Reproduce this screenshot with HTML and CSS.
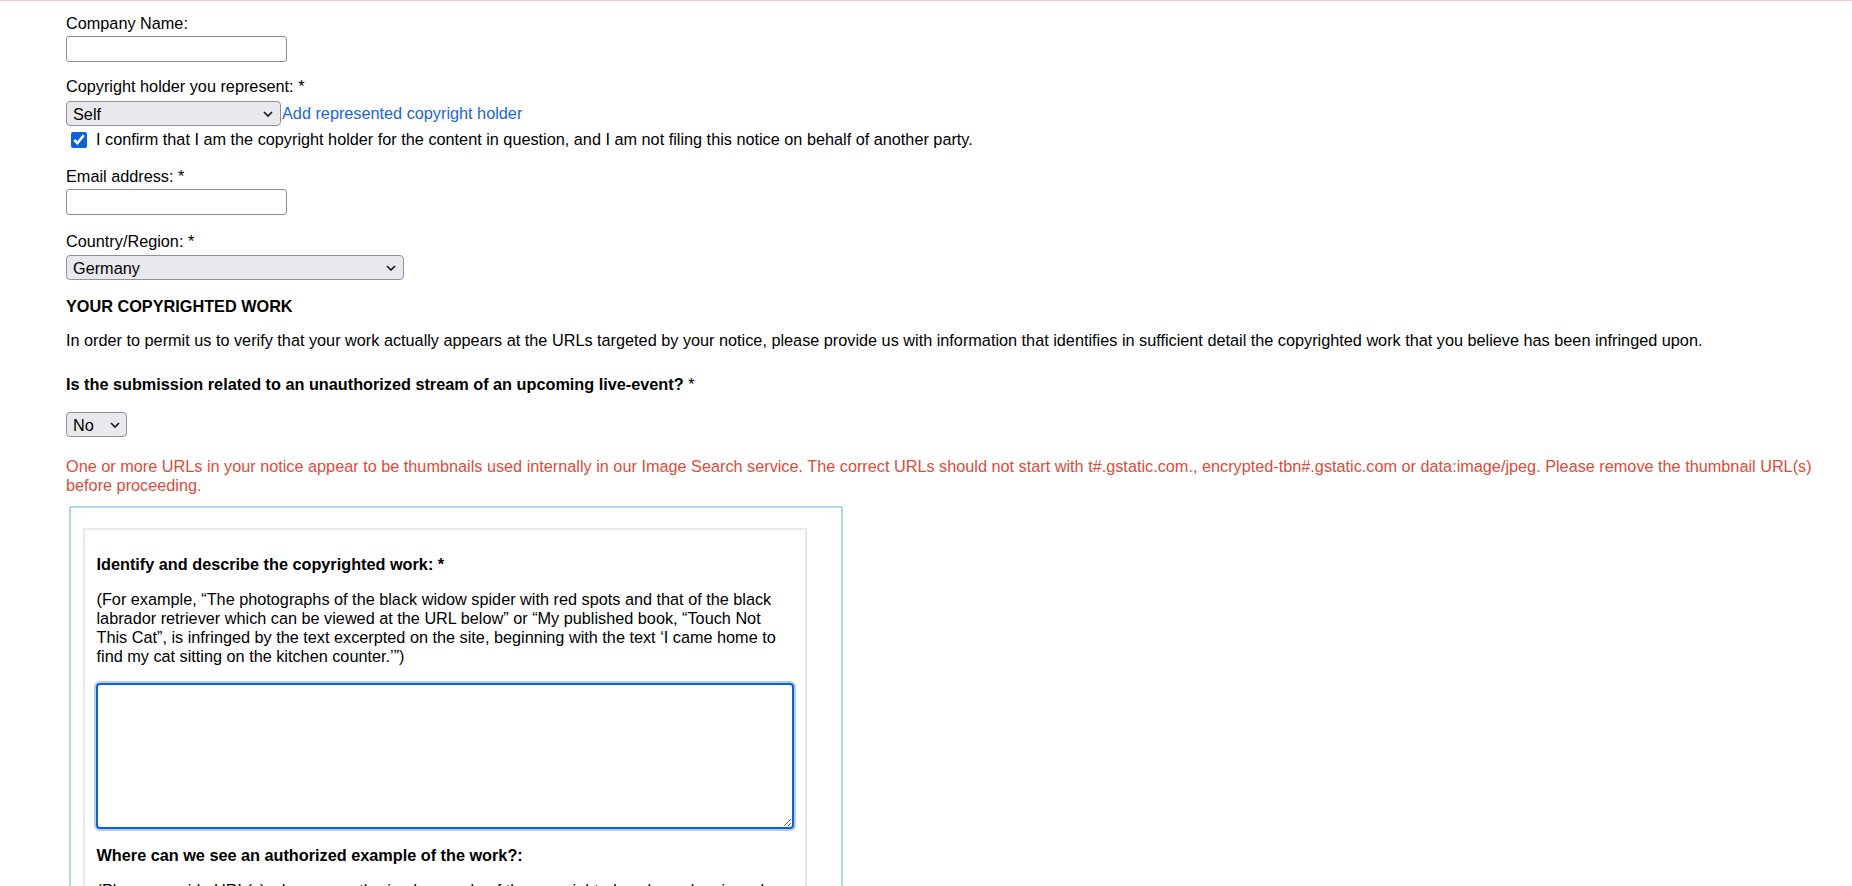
FILE: index.html
```html
<!DOCTYPE html>
<html lang="en">
<head>
<meta charset="utf-8">
<title>Copyright removal form</title>
<link rel="stylesheet" href="styles.css">
</head>
<body>
<div class="topline"></div>
<form class="form">
  <div class="field field-company">
    <label class="label">Company Name:</label>
    <input type="text" class="text-input">
  </div>

  <div class="field field-holder">
    <label class="label">Copyright holder you represent: *</label>
    <div class="select-row">
      <span class="select-wrap">
        <select class="select w-holder"><option>Self</option></select>
        <svg class="chevron" width="10" height="6" viewBox="0 0 10 6"><path d="M1 1 L5 5 L9 1" fill="none" stroke="#111" stroke-width="1.6"/></svg>
      </span><a class="link" href="#">Add represented copyright holder</a>
    </div>
    <div class="check-row">
      <input type="checkbox" class="checkbox" checked>
      <span>I confirm that I am the copyright holder for the content in question, and I am not filing this notice on behalf of another party.</span>
    </div>
  </div>

  <div class="field field-email">
    <label class="label">Email address: *</label>
    <input type="text" class="text-input text-input-email">
  </div>

  <div class="field field-country">
    <label class="label">Country/Region: *</label>
    <span class="select-wrap select-wrap-country">
      <select class="select w-country"><option>Germany</option></select>
      <svg class="chevron" width="10" height="6" viewBox="0 0 10 6"><path d="M1 1 L5 5 L9 1" fill="none" stroke="#111" stroke-width="1.6"/></svg>
    </span>
  </div>

  <p class="section-title">YOUR COPYRIGHTED WORK</p>
  <p class="intro">In order to permit us to verify that your work actually appears at the URLs targeted by your notice, please provide us with information that identifies in sufficient detail the copyrighted work that you believe has been infringed upon.</p>

  <p class="question">Is the submission related to an unauthorized stream of an upcoming live-event? <span class="req">*</span></p>
  <span class="select-wrap select-wrap-no">
    <select class="select w-no"><option>No</option></select>
    <svg class="chevron chevron-no" width="10" height="6" viewBox="0 0 10 6"><path d="M1 1 L5 5 L9 1" fill="none" stroke="#111" stroke-width="1.6"/></svg>
  </span>

  <p class="error">One or more URLs in your notice appear to be thumbnails used internally in our Image Search service. The correct URLs should not start with t#.gstatic.com., encrypted-tbn#.gstatic.com or data:image/jpeg. Please remove the thumbnail URL(s) before proceeding.</p>

  <div class="work-box">
    <div class="work-item">
      <p class="item-title">Identify and describe the copyrighted work: *</p>
      <p class="item-help">(For example, “The photographs of the black widow spider with red spots and that of the black labrador retriever which can be viewed at the URL below” or “My published book, “Touch Not This Cat”, is infringed by the text excerpted on the site, beginning with the text ‘I came home to find my cat sitting on the kitchen counter.’”)</p>
      <textarea class="textarea"></textarea>
      <p class="item-title item-title-second">Where can we see an authorized example of the work?:</p>
      <p class="item-help item-help-second">(Please provide URL(s) where an authorized example of the copyrighted work can be viewed. This will help us to verify the work.)</p>
    </div>
  </div>
</form>
</body>
</html>
```

FILE: styles.css
```css
html, body {
  margin: 0;
  padding: 0;
  background: #fff;
}

body {
  font-family: "Liberation Sans", Arial, sans-serif;
  font-size: 16.25px;
  line-height: normal;
  color: #000;
  overflow: hidden;
}

.topline {
  height: 1px;
  background: #f3c4ca;
}

.form {
  padding: 0 10px 0 66px;
}

.label {
  display: block;
}

.field-company {
  margin-top: 13px;
}

.text-input {
  display: block;
  box-sizing: border-box;
  width: 221px;
  height: 26px;
  margin: 3px 0 0 0;
  padding: 1px 6px;
  border: 1px solid #8b8b96;
  border-radius: 3px;
  background: #fff;
  font: inherit;
}

.field-holder {
  margin-top: 15px;
}

.select-row {
  display: flex;
  align-items: center;
  height: 25px;
  margin-top: 5px;
}

.select-wrap {
  position: relative;
  display: inline-block;
  vertical-align: top;
}

.select {
  display: block;
  box-sizing: border-box;
  height: 25px;
  margin: 0;
  padding: 0 20px 0 6px;
  border: 1px solid #8f8f9d;
  border-radius: 4px;
  background: #e9e9ed;
  color: #000;
  font: inherit;
  -webkit-appearance: none;
  appearance: none;
}

.w-holder { width: 215px; }
.w-country { width: 338px; }
.w-no { width: 61px; }

.chevron {
  position: absolute;
  right: 8px;
  top: 10px;
  pointer-events: none;
}

.chevron-no {
  right: 7px;
}

.link {
  color: #1a66d6;
  text-decoration: none;
  margin-left: 1px;
}

.check-row {
  display: flex;
  align-items: center;
  margin-top: 4px;
}

.checkbox {
  width: 16px;
  height: 16px;
  margin: 0 9px 0 5px;
  accent-color: #0b63d6;
}

.field-email {
  margin-top: 18px;
}

.field-country {
  margin-top: 17px;
}

.select-wrap-country {
  margin-top: 4px;
}

.section-title {
  margin: 17px 0 0 0;
  font-weight: bold;
}

.intro {
  margin: 15px 0 0 0;
}

.question {
  margin: 25px 0 0 0;
  font-weight: bold;
}

.req {
  font-weight: normal;
}

.select-wrap-no {
  display: block;
  width: 61px;
  margin-top: 18px;
}

.error {
  margin: 20px 0 0 0;
  color: #dd4b39;
}

.work-box {
  box-sizing: border-box;
  width: 774px;
  margin: 11px 0 0 3px;
  padding: 20px 0 40px 12px;
  border: 2px solid #add8e6;
}

.work-item {
  box-sizing: border-box;
  width: 724px;
  padding: 9px 11.5px 20px 11.5px;
  border: 2px solid #e8e8f1;
}

.item-title {
  margin: 16px 0 0 0;
  font-weight: bold;
}

.item-help {
  margin: 16px 0 0 0;
}

.textarea {
  display: block;
  box-sizing: border-box;
  width: 698px;
  height: 146px;
  margin: 17px 0 0 -1px;
  padding: 2px 4px;
  border: 2px solid #0f5fd6;
  border-radius: 4px;
  box-shadow: 0 0 0 2px #b7cdee;
  outline: none;
  background: #fff;
  font: inherit;
}

.item-title-second {
  margin-top: 16.5px;
}
```
